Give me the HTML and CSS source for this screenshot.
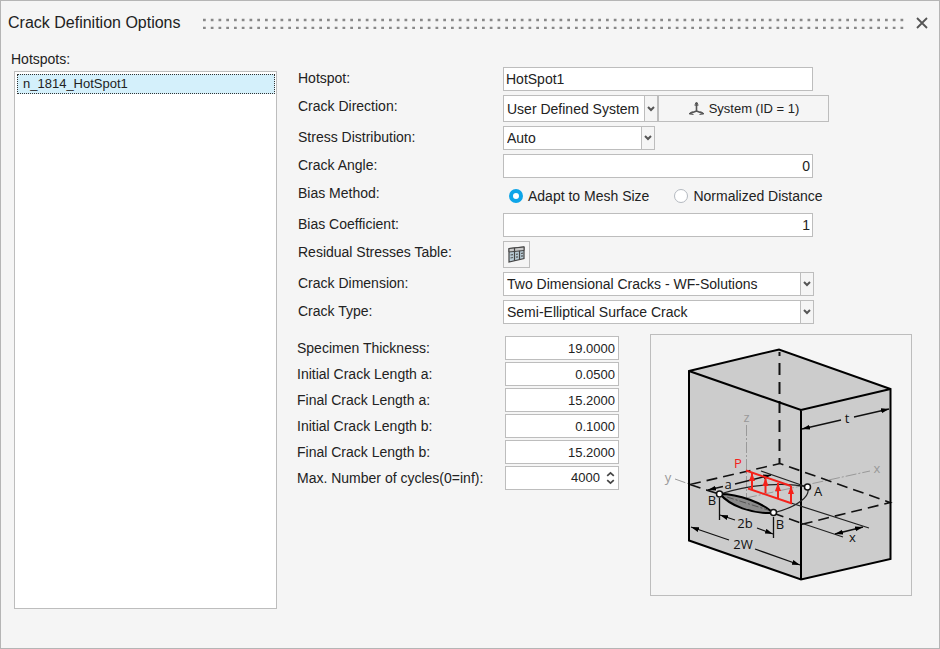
FILE: index.html
```html
<!DOCTYPE html>
<html lang="en">
<head>
  <meta charset="UTF-8" />
  <title>Crack Definition Options</title>
  <meta name="viewport" content="width=device-width, initial-scale=1.0" />
  <link rel="stylesheet" href="styles.css">
</head>
<body>
  <div class="dialog">
    <header class="titlebar">
      <h1>Crack Definition Options</h1>
      <div class="grip"></div>
      <button class="close" type="button" aria-label="Close">
        <svg width="12" height="12" viewBox="0 0 12 12"><path d="M1 1l10 10M11 1L1 11" stroke="#555" stroke-width="1.8" fill="none"/></svg>
      </button>
    </header>

    <div class="content">
      <section class="hotspots">
        <h2 id="hotspotsLabel">Hotspots:</h2>
        <ul class="hotspot-list" role="listbox" aria-labelledby="hotspotsLabel">
          <li class="selected" role="option" aria-selected="true">n_1814_HotSpot1</li>
        </ul>
      </section>

      <form class="options">
        <div class="form-grid">
          <label for="hotspot">Hotspot:</label>
          <input class="field" type="text" id="hotspot" value="HotSpot1" />

          <label for="direction">Crack Direction:</label>
          <div class="row">
            <select class="direction" id="direction"><option>User Defined System</option></select>
            <button class="system-btn" type="button">
              <svg width="17" height="15" viewBox="0 0 17 15" fill="none" stroke="#555">
                <path d="M8.500 10V2M8.500 10L2 12.500M8.500 10l6.500 2.500" stroke-width="1.600"/>
                <path d="M7.200 5V3l1.300-2 1.300 2v2M4.500 10.500L1 12.800l4.500 .7M12.500 10.500L16 12.800l-4.500 .7" stroke-width="1"/>
              </svg>
              System (ID = 1)
            </button>
          </div>

          <label for="stress">Stress Distribution:</label>
          <select class="stress" id="stress"><option>Auto</option></select>

          <label for="angle">Crack Angle:</label>
          <input class="field number" type="text" id="angle" value="0" />

          <span class="label" id="biasLabel">Bias Method:</span>
          <div class="row radios" role="radiogroup" aria-labelledby="biasLabel">
            <label><input type="radio" name="bias" checked />Adapt to Mesh Size</label>
            <label><input type="radio" name="bias" />Normalized Distance</label>
          </div>

          <label for="coefficient">Bias Coefficient:</label>
          <input class="field number" type="text" id="coefficient" value="1" />

          <label for="residual">Residual Stresses Table:</label>
          <button class="table-btn" type="button" id="residual">
            <svg width="17" height="17" viewBox="0 0 17 17">
              <path d="M1 2.500l15-1.500v11.500L1 16z" fill="#b9ccd6" stroke="#444" stroke-width="1.2"/>
              <path d="M1 2.500l15-1.500v3.500L1 6z" fill="#c9c9c9" stroke="#444"/>
              <path d="M6.500 2v12.800M11.500 4.800v8.800" stroke="#444" stroke-width="1.2"/>
              <path d="M2.500 9l2.500-.3M2.500 12l2.500-.5M8 8.300l2-.3M8 11.200l2-.4M13 7.500l2-.3M13 10.200l2-.4" stroke="#555" stroke-width="1.2"/>
            </svg>
          </button>

          <label for="dimension">Crack Dimension:</label>
          <select class="wide" id="dimension"><option>Two Dimensional Cracks - WF-Solutions</option></select>

          <label for="type">Crack Type:</label>
          <select class="wide" id="type"><option>Semi-Elliptical Surface Crack</option></select>
        </div>

        <div class="geometry">
          <div class="params">
            <label for="thickness">Specimen Thickness:</label>
            <input class="field number" type="text" id="thickness" value="19.0000" />
            <label for="initialA">Initial Crack Length a:</label>
            <input class="field number" type="text" id="initialA" value="0.0500" />
            <label for="finalA">Final Crack Length a:</label>
            <input class="field number" type="text" id="finalA" value="15.2000" />
            <label for="initialB">Initial Crack Length b:</label>
            <input class="field number" type="text" id="initialB" value="0.1000" />
            <label for="finalB">Final Crack Length b:</label>
            <input class="field number" type="text" id="finalB" value="15.2000" />
            <label for="cycles">Max. Number of cycles(0=inf):</label>
            <div class="field spinner">
              <input class="number" type="number" id="cycles" value="4000" />
              <svg width="9" height="14" viewBox="0 0 9 14" fill="none" stroke="#444" stroke-width="1.7"><path d="M1.200 4.800l3.300-3 3.300 3M1.200 9.200l3.300 3 3.300-3"/></svg>
            </div>
          </div>

          <div class="diagram">
            <svg viewBox="651 335 260 260" role="img" aria-label="Semi-elliptical surface crack">
              <defs>
                <marker id="arrow" viewBox="0 0 8 6" refX="8" refY="3" markerWidth="8" markerHeight="6" markerUnits="userSpaceOnUse" orient="auto-start-reverse">
                  <path d="M0 0.500L8 3L0 5.500z"/>
                </marker>
                <marker id="load" viewBox="0 0 8 7" refX="8" refY="3.500" markerWidth="8" markerHeight="7" markerUnits="userSpaceOnUse" orient="auto">
                  <path d="M0 0.500L8 3.500L0 6.500z" fill="#f5221b"/>
                </marker>
              </defs>

              <!-- block -->
              <path d="M689 371L779 349.500L890.500 389V559L801 579.500L689 540.500z" fill="#ccc"/>

              <!-- axes -->
              <g fill="none" stroke="#999" stroke-dasharray="11 2 2 2">
                <path d="M746.500 425v73"/>
                <path d="M675 479l14 5"/>
                <path d="M746 498l124-27"/>
              </g>

              <!-- hidden edges and crack plane -->
              <path d="M779.500 352v112" fill="none" stroke="#111" stroke-width="2" stroke-dasharray="12 7" stroke-dashoffset="8"/>
              <path d="M690 484.500l90-21 110 39-89 22M690 484.500l30 10M773 513l28 10" fill="none" stroke="#111" stroke-width="1.600" stroke-dasharray="11 6"/>

              <!-- visible edges -->
              <g fill="none" stroke="#000" stroke-width="2">
                <path d="M689 371L779 349.500L890.500 389V559L801 579.500L689 540.500z"/>
                <path d="M689 371L801 410L890.500 389M801 410v169.500"/>
              </g>

              <!-- crack front and offsets -->
              <g fill="none" stroke="#222" stroke-width="1.200">
                <path d="M720 494C752 484 786 482 807 487C812 495 798 507 773 513"/>
                <path d="M761 471l46 16M791 503l78 25M801 523l42 14"/>
              </g>
              <path d="M720 494C739 494 763 503 773 513C752 514 730 506 720 494z" fill="#8b8b8b" stroke="#000" stroke-width="2"/>
              <path d="M727 497l41 13" stroke="#555" stroke-dasharray="7 2 2 2"/>

              <!-- dimensions -->
              <g fill="none" stroke="#111" stroke-width="1.300">
                <path d="M802 429l39-9" marker-start="url(#arrow)"/>
                <path d="M854 417l35-8" marker-end="url(#arrow)"/>
                <path d="M708 490l15-3.500" marker-start="url(#arrow)"/>
                <path d="M735 484l36-9" marker-end="url(#arrow)"/>
                <path d="M719.500 498v22M773.500 517v21"/>
                <path d="M720 515l15 5" marker-start="url(#arrow)"/>
                <path d="M757 528l16 6" marker-end="url(#arrow)"/>
                <path d="M691 527l38 13" marker-start="url(#arrow)"/>
                <path d="M755 549l45 16" marker-end="url(#arrow)"/>
                <path d="M835 534l28-7" marker-start="url(#arrow)" marker-end="url(#arrow)"/>
              </g>

              <!-- pressure load -->
              <g fill="none" stroke="#f5221b" stroke-width="2">
                <path d="M746 470.500l45 15.500M748 488.500l44 15"/>
                <path d="M752 489v-16" marker-end="url(#load)"/>
                <path d="M765.500 493v-15" marker-end="url(#load)"/>
                <path d="M778 498v-15" marker-end="url(#load)"/>
                <path d="M791 503v-17" marker-end="url(#load)"/>
              </g>

              <g fill="#fff" stroke="#111" stroke-width="1.500">
                <circle cx="719.500" cy="494" r="3"/>
                <circle cx="773.500" cy="512.500" r="3"/>
                <circle cx="807.500" cy="487" r="3"/>
              </g>

              <g class="names">
                <text x="847" y="423">t</text>
                <text x="728" y="489">a</text>
                <text x="712" y="505">B</text>
                <text x="780" y="529">B</text>
                <text x="818" y="496">A</text>
                <text x="745" y="528">2b</text>
                <text x="743" y="549">2W</text>
                <text x="852.500" y="542">x</text>
                <text class="axis" x="746.500" y="422">z</text>
                <text class="axis" x="668" y="482">y</text>
                <text class="axis" x="877" y="473">x</text>
                <text class="pressure" x="738" y="468">P</text>
              </g>
            </svg>
          </div>
        </div>
      </form>
    </div>
  </div>
</body>
</html>
```
FILE: styles.css
```css
* {
  box-sizing: border-box;
  margin: 0;
  padding: 0;
}

body {
  background: #f5f5f5;
  color: #222;
  font-family: "Liberation Sans", Arial, sans-serif;
  font-size: 14px;
  line-height: 16px;
}

input,
select,
button {
  font: inherit;
  color: inherit;
  border: 1px solid #bdbdbd;
  border-radius: 0;
}

.dialog {
  display: flex;
  flex-direction: column;
  min-height: 100vh;
  padding: 0 7px 39px 7px;
  border: 1px solid #b5b5b5;
}

.titlebar {
  display: flex;
  align-items: center;
  height: 44px;
}

.titlebar h1 {
  font-size: 16px;
  font-weight: normal;
  line-height: 20px;
  width: 195px;
}

.grip {
  flex: 1;
  height: 12px;
  background: url("data:image/svg+xml,%3Csvg xmlns='http://www.w3.org/2000/svg' width='31' height='12'%3E%3Cpath d='M0 3h31M0 11h31' stroke='%23888' stroke-width='2.4' stroke-dasharray='2.750 5'/%3E%3C/svg%3E") repeat-x;
}

.close {
  display: flex;
  align-items: center;
  justify-content: center;
  width: 20px;
  height: 20px;
  margin-left: 8px;
  background: none;
  border: none;
}

.content {
  display: flex;
  flex: 1;
  gap: 21px;
}

.hotspots {
  display: flex;
  flex-direction: column;
  width: 269px;
  padding: 6px 0 0 6px;
}

.hotspots h2 {
  font-size: 14px;
  font-weight: normal;
  margin-left: -3px;
}

.hotspot-list {
  flex: 1;
  margin-top: 4px;
  padding: 2px 1px 2px 2px;
  background: #fff;
  border: 1px solid #bdbdbd;
  list-style: none;
}

.hotspot-list li {
  padding: 1px 5px;
  border: 1px dotted #333;
  font-size: 13px;
}

.hotspot-list .selected {
  background: #d4f0fb;
}

.options {
  flex: 1;
  padding-top: 22px;
}

.form-grid {
  display: grid;
  grid-template-columns: 205px minmax(0, 327px);
  grid-template-rows: 24px 27px 24px 24px 27px 24px 27px 24px 24px;
  gap: 4px 0;
}

.form-grid > label,
.form-grid > .label {
  padding-top: 3px;
}

.field {
  width: 310px;
  height: 24px;
  padding: 0 2px;
  background: #fff;
}

.number {
  text-align: right;
}

.row {
  display: flex;
}

select {
  appearance: none;
  height: 24px;
  padding: 0 16px 0 3px;
  background:
    url("data:image/svg+xml,%3Csvg xmlns='http://www.w3.org/2000/svg' width='8' height='6'%3E%3Cpath d='M1 1l3 3 3-3' fill='none' stroke='%23555' stroke-width='2'/%3E%3C/svg%3E") no-repeat right 2px center,
    linear-gradient(90deg, #bdbdbd 1px, #f5f5f5 1px) no-repeat right / 13px 100%,
    #fff;
}

.direction {
  width: 155px;
  height: 27px;
}

.stress {
  width: 152px;
}

.wide {
  width: 311px;
}

.system-btn {
  display: flex;
  align-items: center;
  justify-content: center;
  gap: 4px;
  width: 171px;
  background: #f5f5f5;
  font-size: 13px;
}

.radios {
  align-items: center;
  gap: 25px;
  padding-left: 6px;
}

.radios label {
  display: flex;
  align-items: center;
  gap: 5px;
  white-space: nowrap;
}

.radios input {
  appearance: none;
  width: 14px;
  height: 14px;
  background: #fff;
  border: 1px solid #b4b9c0;
  border-radius: 50%;
}

.radios input:checked {
  border: 4px solid #0ea5e8;
}

.table-btn {
  display: flex;
  align-items: center;
  justify-content: center;
  width: 27px;
  height: 27px;
  background: #f5f5f5;
}

.geometry {
  display: flex;
  align-items: flex-start;
  gap: 31px;
  margin-top: 10px;
}

.params {
  display: grid;
  grid-template-columns: 208px 114px;
  grid-auto-rows: 24px;
  align-items: center;
  gap: 2px 0;
  margin: 2px 0 0 -1px;
}

.params .field {
  width: 114px;
  padding-right: 3px;
  font-size: 13px;
}

.spinner {
  display: flex;
  align-items: center;
  border: 1px solid #bdbdbd;
}

.spinner input {
  flex: 1;
  min-width: 0;
  padding-right: 6px;
  border: none;
  appearance: textfield;
}

.spinner input::-webkit-inner-spin-button {
  appearance: none;
}

.diagram {
  width: 262px;
  border: 1px solid #bdbdbd;
}

.diagram svg {
  display: block;
  width: 100%;
}

.names {
  fill: #111;
  font-family: "Open Sans", sans-serif;
  font-size: 13px;
  font-weight: 500;
  text-anchor: middle;
}

.names .axis {
  fill: #999;
}

.names .pressure {
  fill: #f5221b;
}
```
